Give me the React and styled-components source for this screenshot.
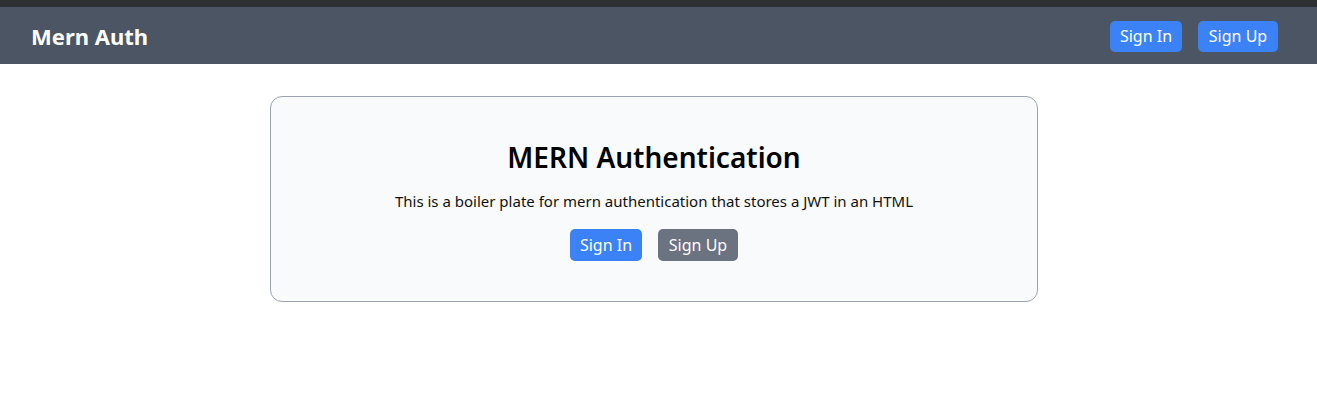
import React from "react";
import styled, { createGlobalStyle } from "styled-components";

const Global = createGlobalStyle`
  html, body { margin: 0; padding: 0; background: #ffffff; }
  body { font-family: "Noto Sans", "Open Sans", sans-serif; color: #111; }
  * { box-sizing: border-box; }
`;

const TopStrip = styled.div`
  height: 7px;
  background: #2f3033;
`;

const Nav = styled.header`
  height: 57px;
  background: #4b5563;
  display: flex;
  align-items: center;
  justify-content: space-between;
  padding: 0 39px 0 31px;
`;

const Brand = styled.h1`
  margin: 0;
  color: #fff;
  font-size: 22px;
  font-weight: 700;
  letter-spacing: 0;
`;

const Actions = styled.nav`
  display: flex;
  gap: 16px;
  padding-top: 1px;
`;

const Button = styled.button`
  height: ${(p) => (p.$tall ? 32 : 31)}px;
  width: ${(p) => p.$w}px;
  border: none;
  border-radius: 5px;
  background: ${(p) => (p.$variant === "gray" ? "#6b7280" : "#3b82f6")};
  color: #fff;
  font-family: inherit;
  font-size: 16px;
  padding: 0;
  display: flex;
  align-items: center;
  justify-content: center;
  cursor: pointer;
`;

const Main = styled.main`
  display: flex;
  justify-content: center;
  padding: 32px 9px 0 0;
`;

const Card = styled.section`
  width: 768px;
  height: 206px;
  background: #f9fafb;
  border: 1px solid #9ca3af;
  border-radius: 12px;
  display: flex;
  flex-direction: column;
  align-items: center;
  padding-top: 40px;
`;

const Heading = styled.h2`
  margin: 0;
  font-size: 28px;
  font-weight: 600;
  line-height: 40px;
  color: #000;
`;

const Lead = styled.p`
  margin: 13px 0 0;
  font-size: 15px;
  line-height: 22px;
  color: #111;
`;

const Row = styled.div`
  display: flex;
  gap: 16px;
  margin-top: 17px;
`;

export default function App() {
  return (
    <>
      <Global />
      <TopStrip />
      <Nav>
        <Brand>Mern Auth</Brand>
        <Actions>
          <Button $w={72}>Sign In</Button>
          <Button $w={80}>Sign Up</Button>
        </Actions>
      </Nav>
      <Main>
        <Card>
          <Heading>MERN Authentication</Heading>
          <Lead>This is a boiler plate for mern authentication that stores a JWT in an HTML</Lead>
          <Row>
            <Button $w={72} $tall>Sign In</Button>
            <Button $w={80} $tall $variant="gray">Sign Up</Button>
          </Row>
        </Card>
      </Main>
    </>
  );
}
